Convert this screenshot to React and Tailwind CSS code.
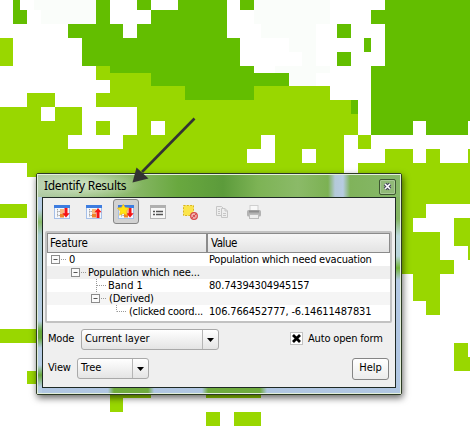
import React from "react";

const DARK =
  "M13 0h7v10h7v14h-14z M96 0h14v24h13v14h14v-14h14v-14h27v-10h49v38h13v28h14v7h35v13h-35v14h-69v-14h-34v-13h-41v-7h-28v-28h-14v-14h28z M137 0h14v10h-14z M240 0h14v10h-14z M385 0h85v121h-2v14h-42v-14h-13v14h-42v-69h14v-42h-14v-14h14z M337 24h14v14h-14z M364 38h7v14h-7z M337 52h14v14h-14z M351 100h7v14h-7z";
const HAZE =
  "M34 0h62v24h-55v-14h-7z M254 0h76v24h-14v42h14v7h-14v13h-27v-13h-14v-7h27v-14h-13v-14h-28v-14h-7z";

// Each band of low-density cells: [top, bottom, [left, right], ...]
const LIGHT_BANDS = [
  [38, 66, [0, 13]],
  [66, 80, [96, 110]],
  [73, 86, [110, 151]],
  [86, 93, [110, 330]],
  [93, 107, [27, 55], [96, 330]],
  [100, 107, [330, 351]],
  [107, 121, [0, 41], [55, 82], [137, 358]],
  [121, 135, [0, 82], [96, 110], [137, 151], [165, 358]],
  [128, 135, [371, 378]],
  [135, 149, [0, 68], [123, 261], [275, 344], [358, 371]],
  [149, 163, [0, 247], [275, 302], [316, 344], [385, 413], [426, 440], [468, 470]],
  [163, 177, [27, 344], [358, 470]],
  [177, 204, [385, 470]],
  [204, 218, [0, 27], [385, 426]],
  [218, 232, [385, 413], [454, 470]],
  [232, 246, [385, 440], [454, 470]],
  [246, 260, [385, 440], [468, 470]],
  [260, 274, [385, 454]],
  [274, 301, [413, 440]],
  [301, 315, [426, 440]],
  [329, 343, [0, 40]],
  [343, 357, [454, 468]],
  [357, 371, [454, 470]],
  [371, 384, [27, 41]],
  [390, 398, [110, 151], [206, 261]],
  [398, 412, [110, 123]],
  [412, 426, [206, 220], [234, 261]],
];

function RasterMap() {
  return (
    <svg className="absolute inset-0" width="470" height="430" shapeRendering="crispEdges">
      <path d={HAZE} fill="#fafdfa" />
      <g fill="#99d700">
        {LIGHT_BANDS.map(([top, bottom, ...runs]) =>
          runs.map(([left, right]) => (
            <rect key={top + "-" + left} x={left} y={top} width={right - left} height={bottom - top} />
          ))
        )}
      </g>
      <path d={DARK} fill="#63be00" />
    </svg>
  );
}

function TreeIcon({ up, star }) {
  return (
    <svg width="18" height="16" viewBox="0 0 18 16">
      <rect x="1.5" y="1.5" width="15" height="13" fill="#f4f7fc" stroke="#a5bfe8" />
      <rect x="1" y="1" width="16" height="3" fill="#3d7de0" />
      <path d="M4.5 5v7.5M4.5 7.5h3M4.5 11.5h3" stroke="#9d9d9d" strokeDasharray="1 .7" />
      <rect x="7" y="5" width="4" height="4" fill="#f8bb7c" />
      <rect x="7" y="9.5" width="4" height="4" fill="#f08428" />
      {up ? (
        <path d="M13 4l3.5 4.2h-2v5.8h-3v-5.800h-2z" fill="#f51414" />
      ) : (
        <path d="M11.5 4h3v5.200h2.200l-3.700 4.300-3.700-4.300h2.200z" fill="#f51414" />
      )}
      {star && <path d="M6.300.3l1.800 3.200 4 .5-2.800 3 .7 4.200-3.700-1.800-3.800 1.800.8-4.100-2.900-3 4-.6z" fill="#ffe414" stroke="#f3b51d" strokeWidth=".6" />}
    </svg>
  );
}

function ListIcon() {
  return (
    <svg width="18" height="16" viewBox="0 0 18 16">
      <rect x="1.5" y="1.5" width="15" height="13" fill="#f7f7f7" stroke="#b4b4b4" />
      <rect x="1" y="1" width="16" height="3" fill="#b0b0b0" />
      <path d="M4 7.5h2M4 10.5h2M7 7.5h7M7 10.5h7" stroke="#555" strokeWidth="1.3" />
    </svg>
  );
}

function DeselectIcon() {
  return (
    <svg width="18" height="16" viewBox="0 0 18 16">
      <rect x="2.5" y="1.5" width="10" height="10" fill="#fbe54b" stroke="#d9b51e" strokeDasharray="2 1.3" />
      <circle cx="13" cy="12" r="3.3" fill="#f7c9c9" stroke="#d64a4a" strokeWidth="1.3" />
      <path d="M10.8 14.2l4.4-4.300M11.800 10.800l2.600 2.600" stroke="#d64a4a" strokeWidth="1.1" />
    </svg>
  );
}

function CopyIcon() {
  return (
    <svg width="18" height="16" viewBox="0 0 18 16" fill="#eee" stroke="#c6c6c6">
      <path d="M3.5 2.5h5l2 2v7h-7z" />
      <path d="M8.5 4.5h3.5l2.5 2.5v6.5h-6zM12 4.5v2.5h2.5M5 5.5h2M5 7.5h2M5 9.5h2M10 9.5h3M10 11.5h3" />
    </svg>
  );
}

function PrintIcon() {
  return (
    <svg width="18" height="16" viewBox="0 0 18 16">
      <rect x="5" y="1.5" width="8" height="5" fill="#f8f8f8" stroke="#cfcfcf" />
      <rect x="2" y="6" width="14" height="6.5" rx="1.5" fill="#b3b3b3" />
      <path d="M4 6.5h10v2H4z" fill="#8e8e8e" />
      <rect x="4.5" y="10.5" width="9" height="4" fill="#eee" stroke="#bcbcbc" />
    </svg>
  );
}

function Tool({ active, children }) {
  return (
    <div
      className={
        "flex h-[25px] w-[26px] items-center justify-center rounded-[3px] border " +
        (active ? "border-[#868686] bg-[#d2d2d2]" : "border-transparent")
      }
    >
      {children}
    </div>
  );
}

function Expander() {
  return (
    <svg className="shrink-0" width="16" height="13" viewBox="0 0 16 13">
      <rect x=".5" y="2.5" width="8" height="8" fill="#fafafa" stroke="#8c8c8c" />
      <path d="M2.5 6.5h4" stroke="#555" />
      <path d="M10 6.5h5" stroke="#999" strokeDasharray="1 1" />
    </svg>
  );
}

function Branch({ through }) {
  return (
    <svg className="shrink-0" width="11" height="13" viewBox="0 0 11 13">
      <path d={through ? "M.5 0v13M1 6.5h9" : "M.5 0v6.5M1 6.5h9"} stroke="#999" strokeDasharray="1 1" fill="none" />
    </svg>
  );
}

function Row({ bg, pad, lead, gap, label, labelClass, value, valueClass }) {
  return (
    <div className={"flex h-[13px] shrink-0 items-center leading-[13px] " + bg}>
      <div className={"flex w-[162px] shrink-0 items-center " + pad}>
        {lead}
        <span className={gap + " " + labelClass}>{label}</span>
      </div>
      <span className={valueClass}>{value}</span>
    </div>
  );
}

function Combo({ label, className }) {
  return (
    <div className={"flex h-[21px] rounded-[3px] border border-[#a9a9a9] bg-gradient-to-b from-white to-[#e4e4e4] " + className}>
      <span className="flex-1 pl-[3px] leading-[18px] tracking-[-0.04px]">{label}</span>
      <span className="flex w-[16px] items-center justify-center border-l border-[#b5b5b5]">
        <svg width="7" height="4">
          <path d="M0 0h7L3.5 4z" fill="#000" />
        </svg>
      </span>
    </div>
  );
}

export default function App() {
  return (
    <div className="relative h-[430px] w-[470px] overflow-hidden bg-white text-[11px] text-black [font-family:'DejaVu_Sans_Condensed','DejaVu_Sans',sans-serif] [font-stretch:condensed] whitespace-nowrap">
      <RasterMap />
      <div className="absolute left-[36px] top-[173px] flex h-[222px] w-[366px] flex-col rounded-[2px] border border-[#2c3a24] bg-[linear-gradient(to_bottom,#84b563_0,#84b563_45px,#bcd8dc_62px,#b8d4da_82px,#72b438_94px,#b4c9e4_106px,#b0c6e2_100%)] shadow-[1px_3px_7px_rgba(0,0,0,.6)]">
        <div className="flex flex-1 flex-col border border-[#e3efdc]">
          <div className="flex h-[22px] shrink-0 items-center justify-between bg-[radial-gradient(ellipse_60px_14px_at_45px_10px,rgba(226,240,218,.75),transparent),linear-gradient(to_right,#b1cba5_0,#8cb96c_90px,#69a83f_140px,#5c9b3b_185px,#7db355_220px,#8bba68_260px,#7cb153_290px,#b4c9d9_297px,#b7cce2_305px,#80b35b_312px,#87b86a_100%)] pl-[6px] pr-[4px]">
            <span className="text-[12px] tracking-[-0.3px] [font-family:'Noto_Sans','Open_Sans',sans-serif] [font-stretch:normal]">Identify Results</span>
            <span className="mt-[1px] flex h-[16px] w-[17px] items-center justify-center rounded-[2px] border border-[#3e5731] bg-[#91b978] shadow-[inset_0_0_0_1px_#a9c996]">
              <svg width="9" height="9" viewBox="0 0 9 9">
                <path d="M2 2l5 5M7 2l-5 5" stroke="#44405a" strokeWidth="3.6" />
                <path d="M2 2l5 5M7 2l-5 5" stroke="#fff" strokeWidth="1.6" />
              </svg>
            </span>
          </div>
          <div className="flex flex-1 bg-[linear-gradient(to_right,transparent_70px,#6fab3e_76px,#6fab3e_110px,transparent_116px,transparent_164px,#6fab3e_170px,#6fab3e_222px,transparent_229px)] bg-[length:100%_6px] bg-bottom bg-no-repeat">
            <div className="w-[4px] shrink-0 bg-[linear-gradient(to_bottom,#b7cde5_0,#b7cde5_12px,#88ba68_25px,#a9cbd0_38px,#b7cde5_124px,#66a83b_134px,#66a83b_141px,#b7cde5_151px,#b7cde5_168px,#66a83b_178px,#b7cde5_190px)]" />
            <div className="mr-[4px] mb-[5px] flex flex-1 flex-col border border-[#1f2a25] bg-[#efefef] px-[3px]">
              <div className="flex h-[33px] shrink-0 items-start gap-[6px] pt-[1px] pl-[3px]">
                <Tool><TreeIcon /></Tool>
                <Tool><TreeIcon up /></Tool>
                <Tool active><TreeIcon star /></Tool>
                <Tool><ListIcon /></Tool>
                <Tool><DeselectIcon /></Tool>
                <Tool><CopyIcon /></Tool>
                <Tool><PrintIcon /></Tool>
              </div>
              <div className="-ml-[1px] flex h-[92px] shrink-0 flex-col rounded-[2px] border-2 border-[#c2c2c2] bg-white">
                <div className="flex h-[20px] shrink-0 bg-gradient-to-b from-[#f8f8f8] to-[#e2e2e2] text-[11.5px] leading-[19px]">
                  <span className="w-[160px] border border-[#8b8b8b] pl-[2px] tracking-[-0.2px]">Feature</span>
                  <span className="flex-1 border border-[#8b8b8b] pl-[3px] tracking-[-0.5px]">Value</span>
                </div>
                <Row bg="bg-white" pad="pl-[4px]" lead={<Expander />} gap="ml-[2px]" label="0" labelClass="" value="Population which need evacuation" valueClass="tracking-[-0.22px]" />
                <Row bg="bg-[#efefef]" pad="pl-[24px]" lead={<Expander />} gap="ml-[1px]" label="Population which nee..." labelClass="tracking-[-0.14px]" value="" valueClass="" />
                <Row bg="bg-white" pad="pl-[49px]" lead={<Branch through />} gap="ml-[1px]" label="Band 1" labelClass="" value="80.74394304945157" valueClass="tracking-[-0.2px]" />
                <Row bg="bg-[#f5f5f5]" pad="pl-[44px]" lead={<Expander />} gap="ml-[2px]" label="(Derived)" labelClass="tracking-[-0.2px]" value="" valueClass="" />
                <Row bg="bg-white" pad="pl-[69px]" lead={<Branch />} gap="ml-[2px]" label="(clicked coord..." labelClass="tracking-[-0.25px]" value="106.766452777, -6.14611487831" valueClass="tracking-[-0.17px]" />
              </div>
              <div className="mt-[6px] flex h-[21px] shrink-0 items-center pl-[2px]">
                <span className="w-[33px] tracking-[-0.2px]">Mode</span>
                <Combo label="Current layer" className="w-[138px]" />
                <span className="mb-[2px] ml-[71px] flex h-[13px] w-[13px] items-center justify-center border border-[#c2c2c2] bg-white">
                  <svg width="9" height="9" viewBox="0 0 9 9">
                    <path d="M1 1l7 7M8 1l-7 7" stroke="#000" strokeWidth="2.8" />
                  </svg>
                </span>
                <span className="ml-[5px] tracking-[-0.17px]">Auto open form</span>
              </div>
              <div className="mt-[7px] flex h-[23px] shrink-0 items-center pl-[2px]">
                <span className="w-[29px] tracking-[-0.2px]">View</span>
                <Combo label="Tree" className="w-[72px]" />
                <button className="ml-[203px] h-[22px] w-[37px] rounded-[3px] border border-[#858585] bg-gradient-to-b from-white to-[#ececec]">Help</button>
              </div>
            </div>
          </div>
        </div>
      </div>
      <svg className="absolute inset-0" width="470" height="430">
        <path d="M194.5 118.5L142 172" stroke="#333" strokeWidth="2.6" />
        <path d="M132.5 182.5L136.5 167.5L148.5 178.5z" fill="#333" />
      </svg>
    </div>
  );
}
